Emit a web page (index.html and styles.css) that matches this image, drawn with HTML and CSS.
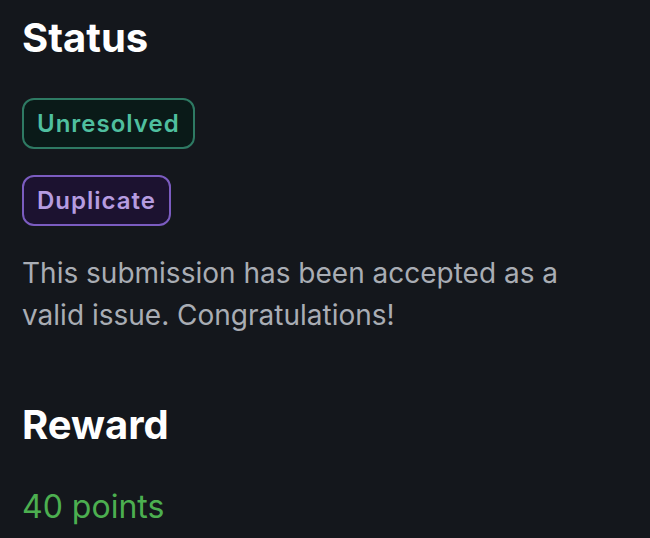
FILE: index.html
```html
<!DOCTYPE html>
<html>
<head>
<meta charset="utf-8">
<link rel="stylesheet" href="styles.css">
</head>
<body>
<div class="panel">
  <section class="section">
    <h2 class="title">Status</h2>
    <div class="badges">
      <span class="badge badge-green">Unresolved</span>
      <span class="badge badge-purple">Duplicate</span>
    </div>
    <p class="desc">This submission has been accepted as a valid issue. Congratulations!</p>
  </section>
  <section class="section reward">
    <h2 class="title">Reward</h2>
    <p class="points">40 points</p>
  </section>
</div>
</body>
</html>
```
FILE: styles.css
```css
html, body {
  margin: 0;
  padding: 0;
  background: #14171c;
  font-family: Inter, "Noto Sans", sans-serif;
}
.panel {
  padding: 14px 22px 0 22px;
}
.title {
  margin: 0;
  font-size: 40px;
  font-weight: 700;
  line-height: 48px;
  color: #ffffff;
}
.badges {
  display: flex;
  flex-direction: column;
  align-items: flex-start;
  gap: 26px;
  margin-top: 36px;
}
.badge {
  display: inline-block;
  box-sizing: border-box;
  height: 51px;
  line-height: 47px;
  padding: 0 13px;
  border: 2px solid;
  border-radius: 12px;
  font-size: 24px;
  font-weight: 600;
  letter-spacing: 1px;
}
.badge-green {
  background: #0a1a18;
  border-color: #2e7a63;
  color: #4fbf9f;
}
.badge-purple {
  background: #1c1230;
  border-color: #7b5cc0;
  color: #b69ce0;
}
.desc {
  margin: 26px 0 0 0;
  width: 600px;
  font-size: 28px;
  line-height: 42px;
  color: #a9adb4;
}
.reward {
  margin-top: 65px;
}
.points {
  margin: 38px 0 0 0;
  font-size: 32px;
  line-height: 40px;
  color: #4caf50;
}
```
